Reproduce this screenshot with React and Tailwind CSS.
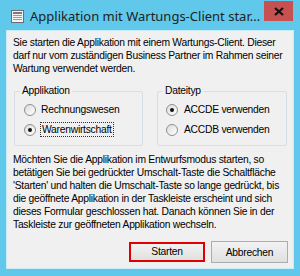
import React from "react";

const Radio = ({ checked }) => (
  <span className="w-[12px] h-[12px] rounded-full border border-[#8f8f8f] bg-gradient-to-br from-[#dcdcdc] to-white flex items-center justify-center shrink-0">
    {checked && <span className="w-[4px] h-[4px] rounded-full bg-[#111]" />}
  </span>
);

const Group = ({ title, className, children }) => (
  <div className={"relative border border-[#d5dfe5] rounded-[2px] " + className}>
    <span className="absolute -top-[8px] left-[5px] px-[2px] bg-[#f0f0f0] leading-[14px]">{title}</span>
    {children}
  </div>
);

const App = () => {
  return (
    <div className="w-[300px] h-[276px] bg-[#60c8ea] flex flex-col" style={{ fontFamily: "'Liberation Sans', Arial, sans-serif" }}>
      {/* Title bar */}
      <div className="h-[30px] flex items-start">
        <div className="flex items-center pt-[7px] pl-[11px] gap-[6px]">
          <svg width="13" height="13" viewBox="0 0 13 13">
            <rect x="0.5" y="0.5" width="12" height="12" fill="#f4f4f4" stroke="#6d6d6d" />
            <rect x="2" y="2" width="9" height="2" fill="#7a7a7a" />
            <rect x="2" y="5" width="9" height="1" fill="#9a9a9a" />
            <rect x="2" y="7" width="9" height="1" fill="#9a9a9a" />
            <rect x="2" y="9" width="9" height="1" fill="#9a9a9a" />
          </svg>
          <span className="text-[13px] text-[#1e1e1e] leading-[18px] whitespace-nowrap" style={{ fontFamily: "'Noto Sans', sans-serif" }}>
            Applikation mit Wartungs-Client star...
          </span>
        </div>
        <div className="ml-auto mr-[7px] mt-[1px] w-[29px] h-[20px] bg-[#c75050] flex items-center justify-center">
          <svg width="10" height="9" viewBox="0 0 10 9">
            <path d="M1 1 L9 8 M9 1 L1 8" stroke="#111" strokeWidth="2.2" />
          </svg>
        </div>
      </div>

      {/* Client area */}
      <div className="mx-[6px] h-[239px] bg-[#f0f0f0] border border-[#c8ecf7] text-[10.3px] tracking-[-0.25px] leading-[13px] text-black flex flex-col">
        <p className="pt-[5px] pl-[6px] pr-[2px] whitespace-nowrap">
          Sie starten die Applikation mit einem Wartungs-Client. Dieser<br />
          darf nur vom zuständigen Business Partner im Rahmen seiner<br />
          Wartung verwendet werden.
        </p>

        <div className="flex mt-[16px] pl-[7px] gap-[14px]">
          <Group title="Applikation" className="w-[129px] h-[55px]">
            <div className="flex flex-col pt-[11px] pl-[9px] gap-[6px]">
              <div className="flex items-center gap-[5px]">
                <Radio />
                <span>Rechnungswesen</span>
              </div>
              <div className="flex items-center gap-[4px]">
                <Radio checked />
                <span className="border border-dotted border-[#333] px-[1px]">Warenwirtschaft</span>
              </div>
            </div>
          </Group>
          <Group title="Dateityp" className="w-[130px] h-[55px]">
            <div className="flex flex-col pt-[11px] pl-[8px] gap-[7px]">
              <div className="flex items-center gap-[6px]">
                <Radio checked />
                <span>ACCDE verwenden</span>
              </div>
              <div className="flex items-center gap-[6px]">
                <Radio />
                <span>ACCDB verwenden</span>
              </div>
            </div>
          </Group>
        </div>

        <p className="mt-[7px] pl-[6px] pr-[1px] whitespace-nowrap">
          Möchten Sie die Applikation im Entwurfsmodus starten, so<br />
          betätigen Sie bei gedrückter Umschalt-Taste die Schaltfläche<br />
          'Starten' und halten die Umschalt-Taste so lange gedrückt, bis<br />
          die geöffnete Applikation in der Taskleiste erscheint und sich<br />
          dieses Formular geschlossen hat. Danach können Sie in der<br />
          Taskleiste zur geöffneten Applikation wechseln.
        </p>

        <div className="flex justify-end mt-auto mb-[5px] pr-[5px] gap-[6px] items-center">
          <button className="w-[76px] h-[20px] border-2 border-[#e00000] bg-gradient-to-b from-[#f2f2f2] to-[#e0e0e0] leading-[14px]">
            Starten
          </button>
          <button className="w-[77px] h-[22px] border border-[#acacac] bg-gradient-to-b from-[#f2f2f2] to-[#e0e0e0]">
            Abbrechen
          </button>
        </div>
      </div>
    </div>
  );
};

export default App;
